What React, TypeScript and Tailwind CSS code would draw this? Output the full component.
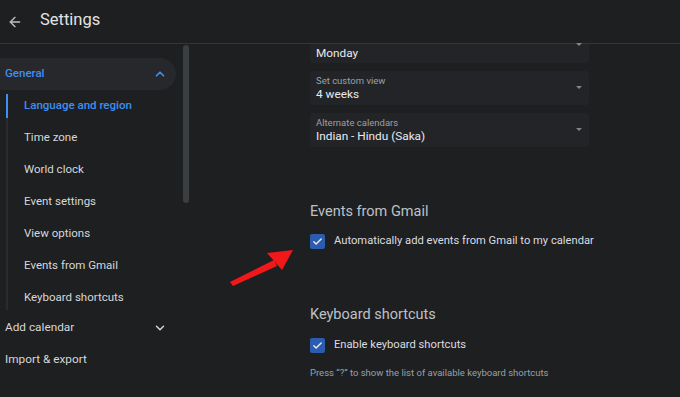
import { ArrowLeft, ChevronUp, ChevronDown } from 'lucide-react'

const subItems = [
  'Time zone',
  'World clock',
  'Event settings',
  'View options',
  'Events from Gmail',
  'Keyboard shortcuts',
]

function Checkbox() {
  return (
    <span className="flex h-[15px] w-[15px] items-center justify-center rounded-[2px] bg-[#2b5cb0]">
      <svg width="11" height="11" viewBox="0 0 24 24" fill="none">
        <path d="M4 12.5l5 5L20 6.5" stroke="#e8eaed" strokeWidth="3.2" strokeLinecap="round" strokeLinejoin="round" />
      </svg>
    </span>
  )
}

function Select({ label, value, clipped }: { label?: string; value: string; clipped?: boolean }) {
  return (
    <div
      className={`relative flex w-[279px] flex-col justify-center rounded-[3px] bg-[#232427] px-[6px] ${
        clipped ? 'h-[19px] rounded-t-none' : 'h-[34px]'
      }`}
    >
      {label && <span className="text-[9.5px] leading-[12px] text-[#9aa0a6]">{label}</span>}
      <span className="text-[11.8px] leading-[15px] text-[#e8eaed]">{value}</span>
      <span
        className={`absolute right-[7px] h-0 w-0 border-x-[3.5px] border-t-[3.5px] border-x-transparent border-t-[#80868b] ${
          clipped ? 'top-[-1px]' : 'top-[15px]'
        }`}
      />
    </div>
  )
}

export default function App() {
  return (
    <div className="h-[397px] w-[680px] overflow-hidden bg-[#1e1f21] font-['Roboto','Liberation_Sans',sans-serif]">
      <header className="flex h-[44px] items-center border-b border-[#34363a] pl-[7px]">
        <ArrowLeft size={16} strokeWidth={2} className="text-[#bdc1c6]" />
        <h1 className="ml-[17px] -mt-[2px] text-[16.5px] text-[#e3e3e3]">Settings</h1>
      </header>

      <div className="flex">
        <aside className="relative w-[190px] shrink-0 pt-[14px]">
          <div className="flex h-[32px] w-[176px] items-center justify-between rounded-r-full bg-[#27282b] pl-[5px] pr-[9px]">
            <span className="text-[11.5px] font-medium text-[#3f8ef2]">General</span>
            <ChevronUp size={14} strokeWidth={3} className="text-[#3f8ef2]" />
          </div>
          <div className="ml-[6px] mt-[4px] border-l-2 border-[#2a2b2e]">
            <div className="-ml-[2px] flex h-[24px] items-center border-l-2 border-[#3f8ef2] pl-[16px]">
              <span className="text-[11.5px] font-medium text-[#3f8ef2]">Language and region</span>
            </div>
            {subItems.map((item) => (
              <div key={item} className="mt-[8px] flex h-[24px] items-center pl-[16px]">
                <span className="text-[11.5px] text-[#d5d7da]">{item}</span>
              </div>
            ))}
          </div>
          <div className="mt-[2px] flex h-[32px] w-[176px] items-center justify-between pl-[5px] pr-[9px]">
            <span className="text-[11.8px] text-[#d5d7da]">Add calendar</span>
            <ChevronDown size={14} strokeWidth={2.5} className="text-[#d5d7da]" />
          </div>
          <div className="flex h-[32px] items-center pl-[5px]">
            <span className="text-[11.8px] text-[#d5d7da]">Import &amp; export</span>
          </div>
          <div className="absolute right-[1px] top-[1px] h-[158px] w-[6px] rounded-full bg-[#3b3e41]" />
        </aside>

        <main className="relative flex-1 pl-[120px]">
          <div className="flex flex-col gap-[8px]">
            <Select value="Monday" clipped />
            <Select label="Set custom view" value="4 weeks" />
            <Select label="Alternate calendars" value="Indian - Hindu (Saka)" />
          </div>

          <h2 className="mt-[54px] text-[14.5px] text-[#bdc1c6]">Events from Gmail</h2>
          <label className="mt-[10px] flex items-center gap-[9px]">
            <Checkbox />
            <span className="text-[11.2px] text-[#dadce0]">Automatically add events from Gmail to my calendar</span>
          </label>

          <h2 className="mt-[54px] text-[14.5px] text-[#bdc1c6]">Keyboard shortcuts</h2>
          <label className="mt-[12px] flex items-center gap-[9px]">
            <Checkbox />
            <span className="text-[11.2px] text-[#dadce0]">Enable keyboard shortcuts</span>
          </label>
          <p className="mt-[12px] text-[9.5px] text-[#9aa0a6]">
            Press &ldquo;?&rdquo; to show the list of available keyboard shortcuts
          </p>

          <svg
            className="absolute left-[40px] top-[205px]"
            width="66"
            height="38"
            viewBox="0 0 66 38"
          >
            <polygon points="0,33 44,11 47,17 3,37" fill="#f01818" />
            <polygon points="37,4 63,1 52,21" fill="#f01818" />
          </svg>
        </main>
      </div>
    </div>
  )
}
